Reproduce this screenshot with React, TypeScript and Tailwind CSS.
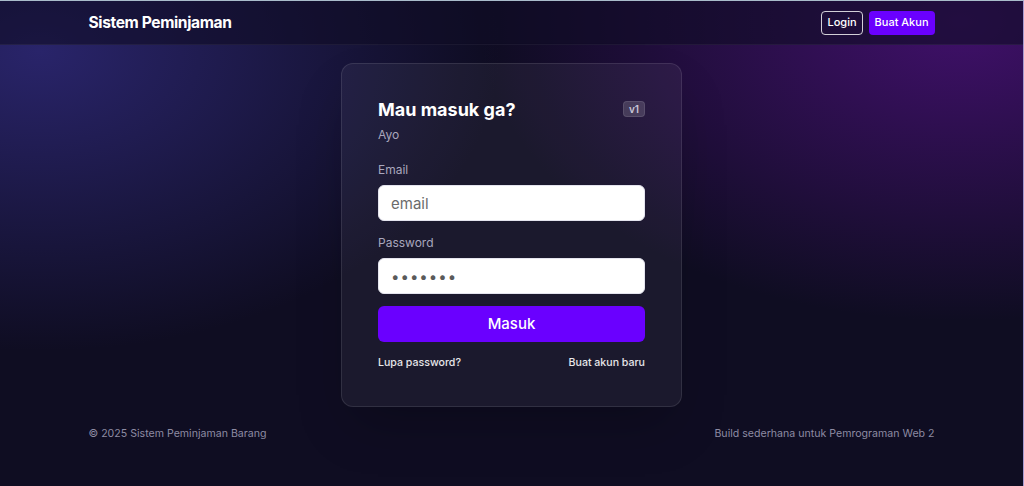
import React from 'react';

const Navbar = () => (
  <nav className="h-[44px] bg-[#0f0c24]/60 border-b border-white/5">
    <div className="w-[846px] mx-auto h-full flex items-center justify-between">
      <span className="text-[15.6px] font-bold text-white tracking-tight">Sistem Peminjaman</span>
      <div className="flex items-center gap-[6px]">
        <button className="h-[24px] px-[5px] rounded-[4px] border border-white/80 text-[11px] font-medium text-white">
          Login
        </button>
        <button className="h-[24px] px-[6px] rounded-[4px] bg-[#6a00ff] text-[11px] font-medium text-white">
          Buat Akun
        </button>
      </div>
    </div>
  </nav>
);

const Field = ({ label, type, placeholder, value, gap }: { label: string; type: string; placeholder?: string; value?: string; gap: string }) => (
  <div className={gap}>
    <label className="block text-[12px] text-[#a9a7bd] leading-none mb-[9px]">{label}</label>
    <input
      type={type}
      placeholder={placeholder}
      defaultValue={value}
      className="w-full h-[36px] rounded-[6px] bg-white px-[12px] text-[15px] text-[#5a5a5a] tracking-[1px] placeholder:tracking-normal placeholder:text-[#6b6b6b] outline-none border border-[#e4e4ee]"
    />
  </div>
);

const LoginCard = () => (
  <div className="w-[341px] rounded-[12px] border border-white/10 bg-white/[0.05] px-[36px] pt-[34px] pb-[36px] shadow-2xl">
    <div className="flex items-start justify-between">
      <div>
        <h1 className="text-[18px] font-bold text-white leading-[24px]">Mau masuk ga?</h1>
        <p className="text-[12px] text-[#a9a7bd] leading-[16px] mt-[5px]">Ayo</p>
      </div>
      <span className="mt-[3px] h-[16px] px-[5px] rounded-[4px] bg-white/15 border border-white/10 text-[10px] font-semibold text-[#c9c7d9] leading-[14px]">
        v1
      </span>
    </div>
    <Field gap="mt-[21px]" label="Email" type="email" placeholder="email" />
    <Field gap="mt-[16px]" label="Password" type="password" value="1234567" />
    <button className="mt-[12px] w-full h-[36px] rounded-[6px] bg-[#6a00ff] text-[15px] font-medium text-white">
      Masuk
    </button>
    <div className="mt-[14px] flex justify-between text-[10.6px] leading-[14px] font-medium text-white/90">
      <a>Lupa password?</a>
      <a>Buat akun baru</a>
    </div>
  </div>
);

export default function App() {
  return (
    <div
      className="relative w-full h-[486px] overflow-hidden border-t border-t-[#a9bccb] border-r border-r-[#a79bd0] bg-[#0f0d22] font-['Inter',sans-serif] bg-[radial-gradient(ellipse_460px_300px_at_40px_50px,#29246a_0%,transparent_100%),radial-gradient(ellipse_480px_300px_at_960px_20px,#40106a_0%,transparent_100%)]"
    >
      <Navbar />
      <main className="flex justify-center pt-[18px]">
        <LoginCard />
      </main>
      <footer className="w-[846px] mx-auto mt-[19px] flex justify-between text-[10.6px] leading-[15px] text-[#8d8ba3]">
        <span>© 2025 Sistem Peminjaman Barang</span>
        <span>Build sederhana untuk Pemrograman Web 2</span>
      </footer>
    </div>
  );
}
